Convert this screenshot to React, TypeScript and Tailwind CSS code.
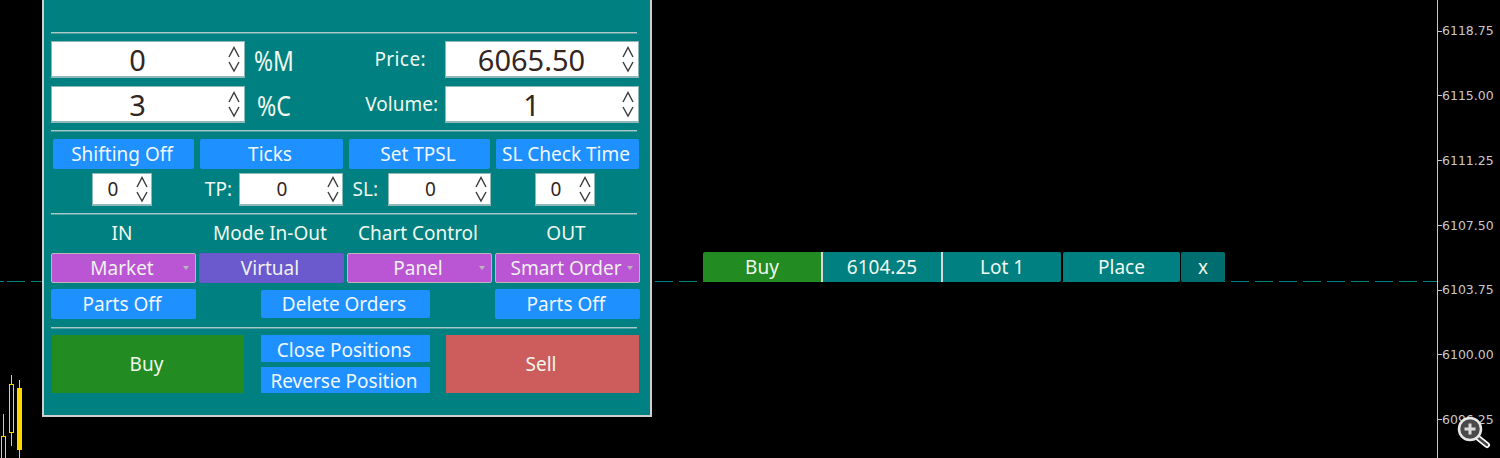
import React from "react";

const font = { fontFamily: '"Noto Sans", "DejaVu Sans", sans-serif' };

const axisLabels = ["6118.75", "6115.00", "6111.25", "6107.50", "6103.75", "6100.00", "6096.25"];

const Spinner = () => (
  <svg width="14" height="30" viewBox="0 0 14 30" fill="none" stroke="#3a3a3a" strokeWidth="1.4" className="shrink-0">
    <path d="M2 13 7 3.5 12 13" />
    <path d="M2 18 7 27 12 18" />
  </svg>
);

const NumInput = ({ value, big, className }: { value: string; big?: boolean; className: string }) => (
  <div
    className={`flex items-center bg-white border border-b-2 border-[#8fb8b8] shrink-0 text-[#33261f] ${
      big ? "text-[29px] h-[37px] pr-[3px]" : "text-[19px] h-[33px] pr-[2px]"
    } ${className}`}
  >
    <span className={`flex-1 text-center leading-none ${big ? "pr-[4px]" : "pr-[2px]"}`}>{value}</span>
    <Spinner />
  </div>
);

const Btn = ({ label, className }: { label: string; className: string }) => (
  <div className={`flex items-center justify-center bg-[#1e90ff] text-[#f0f8ff] text-[19px] rounded-[2px] shrink-0 whitespace-nowrap pr-[3px] ${className}`}>
    {label}
  </div>
);

const Drop = ({ label, arrow = true }: { label: string; arrow?: boolean }) => (
  <div
    className={`relative flex items-center justify-center w-[145px] h-[30px] rounded-[2px] text-[#f0f0f0] text-[19px] whitespace-nowrap pr-[3px] ${
      arrow ? "bg-[#ba55d3] border border-[#b8b8b8]" : "bg-[#6a5acd]"
    }`}
  >
    {label}
    {arrow && <span className="absolute right-[6px] top-[12px] border-x-[3px] border-t-[4px] border-x-transparent border-t-[#b9b9b9]" />}
  </div>
);

const Divider = () => <div className="h-[2px] w-[586px] border-t border-b border-t-[#a8c8c8] border-b-[#4fa0a0]" />;

const Candles = () => (
  <svg width="30" height="88" viewBox="0 370 30 88" className="absolute left-0 top-[370px]" fill="none" stroke="#ffd700">
    <path d="M3.5 414v22M11.5 375v9M11.5 433v13M19.5 380v8M19.5 450v8" />
    <rect x="1.5" y="436.5" width="4" height="24" />
    <rect x="9.5" y="384.5" width="4" height="48" />
    <rect x="17" y="388" width="5" height="62" fill="#ffd700" stroke="none" />
  </svg>
);

export default function App() {
  return (
    <div className="relative w-[1500px] h-[458px] bg-black overflow-hidden" style={font}>
      {/* chart background */}
      <div className="absolute left-0 top-[281px] w-[1437px] h-px bg-[repeating-linear-gradient(90deg,#008080_0_18px,transparent_18px_24px)] bg-[position:7px_0]" />
      <Candles />

      {/* price axis */}
      <div className="absolute left-[1437px] top-0 h-[458px] w-[63px] border-l border-[#c8c8c8] flex flex-col pt-[24px] gap-[50.75px]">
        {axisLabels.map((p) => (
          <div key={p} className="flex items-center h-[14px] text-[#c8c8c8] leading-none">
            <span className="w-[4px] h-px bg-[#c8c8c8]" />
            <span style={{ fontFamily: '"DejaVu Sans", sans-serif' }} className="text-[12.5px] pt-[1px]">{p}</span>
          </div>
        ))}
      </div>

      {/* zoom badge */}
      <svg width="36" height="36" viewBox="0 0 36 36" className="absolute left-[1456px] top-[415px]" fill="none">
        <path d="M21 22l10 8" stroke="#fff" strokeWidth="6" strokeLinecap="round" />
        <path d="M21 22l10 8" stroke="#444" strokeWidth="2.5" strokeLinecap="round" />
        <circle cx="14" cy="14" r="11" fill="#4a4a4a" stroke="#e8e8e8" strokeWidth="2.5" />
        <path d="M14 8.5v11M8.5 14h11" stroke="#ddd" strokeWidth="3" />
      </svg>

      {/* trade panel */}
      <div className="absolute left-[42px] top-0 w-[610px] h-[417px] bg-[#008080] border-x-2 border-b-2 border-[#cfcfcf] pl-[7px] text-[#f0f8f0] flex flex-col">
        <div className="h-[32px]" />
        <Divider />

        <div className="flex mt-[7px] h-[37px] items-center">
          <NumInput value="0" big className="w-[194px]" />
          <span className="ml-[9px] w-[60px] text-[28px] leading-none origin-left scale-x-[0.82]">%M</span>
          <span className="w-[112px] text-right text-[19px] tracking-[0.4px]">Price:</span>
          <NumInput value="6065.50" big className="w-[194px] ml-[19px]" />
        </div>
        <div className="flex mt-[8px] h-[37px] items-center">
          <NumInput value="3" big className="w-[194px]" />
          <span className="ml-[12px] w-[57px] text-[28px] leading-none origin-left scale-x-[0.83]">%C</span>
          <span className="w-[124px] text-right text-[19px]">Volume:</span>
          <NumInput value="1" big className="w-[194px] ml-[7px]" />
        </div>

        <div className="mt-[7px]"><Divider /></div>

        <div className="flex mt-[7px] ml-[2px]">
          <Btn label="Shifting Off" className="w-[141px] h-[30px]" />
          <Btn label="Ticks" className="w-[143px] h-[30px] ml-[6px]" />
          <Btn label="Set TPSL" className="w-[141px] h-[30px] ml-[6px]" />
          <Btn label="SL Check Time" className="w-[143px] h-[30px] ml-[6px]" />
        </div>
        <div className="flex mt-[4px] items-center h-[33px] text-[19px]">
          <NumInput value="0" className="w-[60px] ml-[41px]" />
          <span className="w-[87px] text-right pr-[7px]">TP:</span>
          <NumInput value="0" className="w-[104px]" />
          <span className="w-[45px] text-right pr-[10px]">SL:</span>
          <NumInput value="0" className="w-[103px]" />
          <NumInput value="0" className="w-[60px] ml-[44px]" />
        </div>

        <div className="mt-[7px]"><Divider /></div>

        <div className="flex mt-[3px] h-[30px] items-center text-[19px] text-center">
          <span className="w-[148px] pr-[6px]">IN</span>
          <span className="w-[148px] pr-[6px] whitespace-nowrap">Mode In-Out</span>
          <span className="w-[148px] pr-[6px] whitespace-nowrap">Chart Control</span>
          <span className="w-[148px] pr-[6px]">OUT</span>
        </div>
        <div className="flex gap-[3px] mt-[5px]">
          <Drop label="Market" />
          <Drop label="Virtual" arrow={false} />
          <Drop label="Panel" />
          <Drop label="Smart Order" />
        </div>
        <div className="flex items-center mt-[6px] h-[30px]">
          <Btn label="Parts Off" className="w-[145px] h-[30px]" />
          <Btn label="Delete Orders" className="w-[169px] h-[28px] ml-[65px]" />
          <Btn label="Parts Off" className="w-[145px] h-[30px] ml-[65px]" />
        </div>

        <div className="mt-[8px]"><Divider /></div>

        <div className="flex mt-[6px] ml-px h-[58px]">
          <div className="flex items-center justify-center w-[192px] bg-[#228b22] text-[19px] pr-[3px]">Buy</div>
          <div className="flex flex-col justify-between ml-[17px] w-[169px]">
            <Btn label="Close Positions" className="h-[27px] pt-[3px] !rounded-none" />
            <Btn label="Reverse Position" className="h-[26px] pt-[2px] !rounded-none" />
          </div>
          <div className="flex items-center justify-center w-[193px] ml-[16px] bg-[#cd5c5c] text-[19px] pr-[3px]">Sell</div>
        </div>
      </div>

      {/* order toolbar */}
      <div className="absolute left-[703px] top-[252px] flex h-[30px] text-[#f0f8f0] text-[19px]">
        <div className="flex items-center justify-center w-[118px] bg-[#228b22] rounded-l-[2px]">Buy</div>
        <div className="w-[2px] bg-[#d8d8d8]" />
        <div className="flex items-center justify-center w-[118px] bg-[#008080]">6104.25</div>
        <div className="w-[2px] bg-[#d8d8d8]" />
        <div className="flex items-center justify-center w-[118px] bg-[#008080] rounded-r-[2px]">Lot 1</div>
        <div className="flex items-center justify-center w-[117px] ml-[2px] bg-[#008080] rounded-[2px]">Place</div>
        <div className="flex items-center justify-center w-[44px] ml-[1px] bg-[#006e6e] rounded-[2px]">x</div>
      </div>
    </div>
  );
}
